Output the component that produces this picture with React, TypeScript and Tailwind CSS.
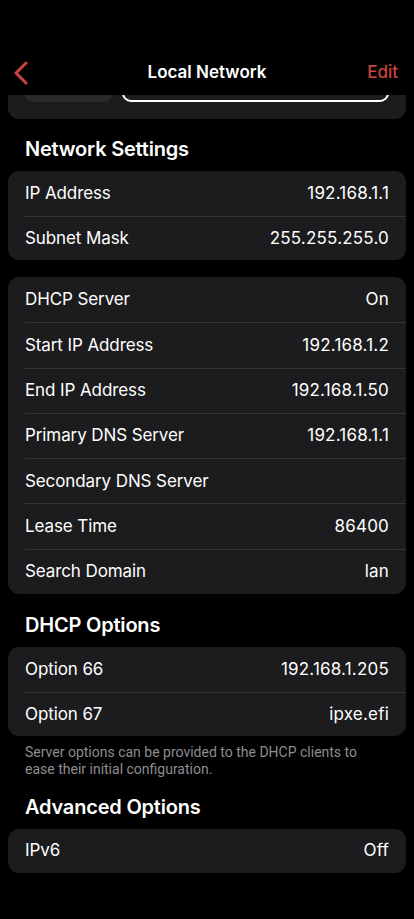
import React from "react";

type Row = { label: string; value?: string };

function Card({ rows, rowH }: { rows: Row[]; rowH: string }) {
  return (
    <div className="mx-2 rounded-[11px] bg-[#1c1c1e] overflow-hidden">
      {rows.map((r, i) => (
        <div key={r.label} className="pl-[17px]">
          <div
            className={
              "flex items-center justify-between pr-[17px] " +
              rowH +
              (i > 0 ? " border-t border-[#343436]" : "")
            }
          >
            <span className="text-[17px] text-white tracking-[-0.1px]">{r.label}</span>
            <span className="text-[17px] text-white tracking-[0.2px]">{r.value ?? ""}</span>
          </div>
        </div>
      ))}
    </div>
  );
}

function Heading({ children }: { children: React.ReactNode }) {
  return (
    <div className="px-[25px] text-[20px] font-semibold text-white tracking-[-0.2px] leading-[24px]">
      {children}
    </div>
  );
}

export default function App() {
  return (
    <div
      className="min-h-[919px] w-[414px] bg-black text-white"
      style={{ fontFamily: "Inter, 'Noto Sans', sans-serif" }}
    >
      {/* Header */}
      <div className="relative flex h-[95px] items-end pb-[4px]">
        <div className="flex h-[36px] w-full items-center justify-between px-[11px]">
          <svg width="18" height="26" viewBox="0 0 18 26" fill="none">
            <path
              d="M15 3 L5 13 L15 23"
              stroke="#c9463d"
              strokeWidth="3"
              strokeLinecap="round"
              strokeLinejoin="round"
            />
          </svg>
          <span className="absolute left-1/2 -translate-x-1/2 text-[17px] font-semibold text-white">
            Local Network
          </span>
          <span className="pr-[5px] text-[17px] font-medium text-[#c9463d]">Edit</span>
        </div>
      </div>

      {/* Partially hidden top card */}
      <div className="h-[24px] overflow-hidden">
        <div className="mx-2 -mt-[30px] flex h-[54px] items-end gap-[10px] rounded-[11px] bg-[#1c1c1e] px-[17px] pb-[17px]">
          <div className="h-[30px] w-[87px] rounded-[8px] bg-[#2a2a2c]" />
          <div className="h-[30px] flex-1 rounded-[9px] border-2 border-white" />
        </div>
      </div>

      <div className="h-[18px]" />
      <Heading>Network Settings</Heading>
      <div className="h-[10px]" />
      <Card
        rowH="h-[44.5px]"
        rows={[
          { label: "IP Address", value: "192.168.1.1" },
          { label: "Subnet Mask", value: "255.255.255.0" },
        ]}
      />
      <div className="h-[17px]" />
      <Card
        rowH="h-[45.3px]"
        rows={[
          { label: "DHCP Server", value: "On" },
          { label: "Start IP Address", value: "192.168.1.2" },
          { label: "End IP Address", value: "192.168.1.50" },
          { label: "Primary DNS Server", value: "192.168.1.1" },
          { label: "Secondary DNS Server" },
          { label: "Lease Time", value: "86400" },
          { label: "Search Domain", value: "lan" },
        ]}
      />
      <div className="h-[19px]" />
      <Heading>DHCP Options</Heading>
      <div className="h-[10px]" />
      <Card
        rowH="h-[44.5px]"
        rows={[
          { label: "Option 66", value: "192.168.1.205" },
          { label: "Option 67", value: "ipxe.efi" },
        ]}
      />
      <div
        className="px-[25px] pt-[7.5px] text-[14px] leading-[17px] text-[#8d8d92]"
        style={{ fontFamily: "Roboto, 'Noto Sans', sans-serif" }}
      >
        Server options can be provided to the DHCP clients to ease their initial configuration.
      </div>
      <div className="h-[17.5px]" />
      <Heading>Advanced Options</Heading>
      <div className="h-[10px]" />
      <Card rowH="h-[43.5px]" rows={[{ label: "IPv6", value: "Off" }]} />
    </div>
  );
}
